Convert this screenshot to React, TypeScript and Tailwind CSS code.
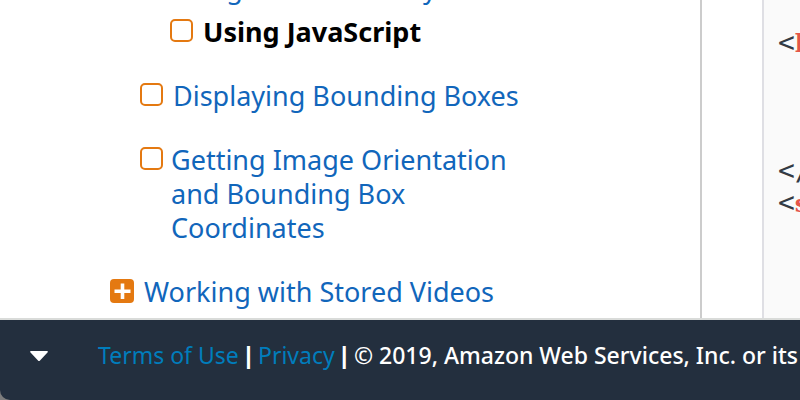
import React from 'react';

function Box() {
  return <span aria-hidden="true" className="mt-1 size-[23px] shrink-0 rounded-[5px] border-2 border-[#e47911]" />;
}

function Bar() {
  return <span className="font-['Liberation_Sans',sans-serif] font-bold"> | </span>;
}

function Tag({ name }: { name: string }) {
  return <b className="font-['DejaVu_Serif',serif] text-2xl leading-none text-[#e45649]">{name}</b>;
}

const link = 'text-[#1166bb] hover:underline';

export default function App() {
  return (
    <div className="flex h-screen flex-col overflow-hidden bg-[#7d7d7d] font-['Noto_Sans','Open_Sans',sans-serif]">
      <main className="flex min-h-0 flex-1 overflow-hidden bg-white">
        <nav aria-label="Contents" className="flex w-[702px] shrink-0 flex-col justify-end border-r-2 border-[#cccccc] pb-[9px] pl-[110px] text-[27px] leading-[34px]">
          <ul className="flex flex-col gap-[30px]">
            <li className="ml-[60px] flex flex-col gap-[10px]">
              <a href="#library" className={link}>Using the API Library</a>
              <span className="flex gap-[10px] text-black">
                <Box />
                <a href="#javascript" aria-current="page" className="font-bold">Using JavaScript</a>
              </span>
            </li>
            <li className="ml-[30px] flex gap-[10px]">
              <Box />
              <a href="#boxes" className={link}>Displaying Bounding Boxes</a>
            </li>
            <li className="ml-[30px] flex gap-2">
              <Box />
              <a href="#orientation" className={link}>
                Getting Image Orientation<br />and Bounding Box<br />Coordinates
              </a>
            </li>
            <li className="flex gap-[10px]">
              <svg className="mt-1 size-6 shrink-0" viewBox="0 0 24 24" aria-hidden="true">
                <rect width="24" height="24" rx="4" fill="#e47911" />
                <path d="M12.500 4.500v15.500M4.500 12.300h16" stroke="white" strokeWidth="3.600" />
              </svg>
              <a href="#videos" className={link}>Working with Stored Videos</a>
            </li>
          </ul>
        </nav>
        <div className="w-[60px] shrink-0" />
        <pre className="min-w-0 flex-1 overflow-hidden border-l-2 border-[#dfdfe4] bg-[#fafafa] pt-[27px] pl-[14px] text-[28px] leading-8 text-[#333a44]">
          <code className="block font-['DejaVu_Sans_Mono',monospace]">{'<'}<Tag name="head" />{'>\n\n\n\n</'}<Tag name="head" />{'>\n<'}<Tag name="script" />{'>'}</code>
        </pre>
      </main>
      <footer className="flex h-[82px] shrink-0 items-center overflow-hidden rounded-bl-[10px] border-t-2 border-[#d9dbd9] bg-[#232f3e] pb-2 pl-[30px] text-[23px] whitespace-nowrap text-white">
        <button type="button" aria-label="Collapse footer" className="mr-[50px] shrink-0">
          <svg className="h-[10px] w-[18px]" viewBox="0 0 18 10" fill="white" aria-hidden="true">
            <path d="M1 0H17Q18.500 .5 17.500 1.500L10 9.500Q9 10.500 8 9.500L.5 1.500Q-.5 .5 1 0Z" />
          </svg>
        </button>
        <p className="font-medium">
          <a href="#terms" className="font-normal text-[#007dbc]">Terms of Use</a>
          <Bar />
          <a href="#privacy" className="font-normal text-[#007dbc]">Privacy</a>
          <Bar />© 2019, Amazon Web Services, Inc. or its affiliates.
        </p>
      </footer>
    </div>
  );
}
